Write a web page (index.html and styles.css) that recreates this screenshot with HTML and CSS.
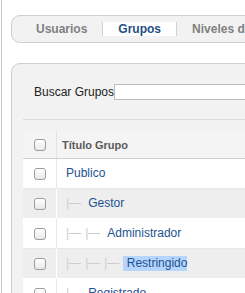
FILE: index.html
```html
<!DOCTYPE html>
<html lang="es">
<head>
  <meta charset="UTF-8">
  <link rel="stylesheet" href="styles.css">
</head>
<body>
  <div class="page">
    <ul class="tabs">
      <li>Usuarios</li>
      <li class="active">Grupos</li>
      <li>Niveles de acceso</li>
    </ul>

    <div class="panel">
      <div class="filter">
        <label for="search">Buscar Grupos</label>
        <input type="text" id="search">
      </div>
      <div class="rule"></div>

      <table class="groups">
        <thead>
          <tr>
            <th class="check"><span class="box"></span></th>
            <th>Título Grupo</th>
          </tr>
        </thead>
        <tbody>
          <tr>
            <td class="check"><span class="box"></span></td>
            <td><a href="#">Publico</a></td>
          </tr>
          <tr class="alt">
            <td class="check"><span class="box"></span></td>
            <td><span class="gi">|&mdash;</span><a href="#">Gestor</a></td>
          </tr>
          <tr>
            <td class="check"><span class="box"></span></td>
            <td><span class="gi">|&mdash;</span><span class="gi">|&mdash;</span><a href="#">Administrador</a></td>
          </tr>
          <tr class="alt">
            <td class="check"><span class="box"></span></td>
            <td><span class="gi">|&mdash;</span><span class="gi">|&mdash;</span><span class="gi">|&mdash;</span><a href="#" class="selected">&nbsp;Restringido</a></td>
          </tr>
          <tr>
            <td class="check"><span class="box"></span></td>
            <td><span class="gi">|&mdash;</span><a href="#">Registrado</a></td>
          </tr>
        </tbody>
      </table>
    </div>
  </div>
</body>
</html>
```

FILE: styles.css
```css
html, body {
  margin: 0;
  padding: 0;
  overflow: hidden;
  background-color: #fff;
}

body {
  font-family: "Liberation Sans", Arial, sans-serif;
  font-size: 12px;
  color: #222;
}

.page {
  margin-left: 1px;
  border-left: 1px solid #cacaca;
  padding: 15px 0 0 9px;
  height: 300px;
  width: 400px;
}

.tabs {
  display: flex;
  list-style: none;
  margin: 0;
  padding: 6px 0 6px 9px;
  width: 360px;
  border: 1px solid #cfcfcf;
  border-radius: 9px;
  background-color: #f2f2f2;
}

.tabs li {
  padding: 0 15px;
  line-height: 14px;
  height: 14px;
  font-weight: bold;
  color: #808080;
  white-space: nowrap;
  border-left: 1px solid #d2d2d2;
}

.tabs li:first-child {
  border-left: none;
}

.tabs li.active {
  background-color: #fff;
  color: #1f4f82;
}

.panel {
  margin-top: 20px;
  width: 360px;
  height: 260px;
  padding: 0 0 0 11px;
  border: 1px solid #cfcfcf;
  border-radius: 9px;
  background-color: #f2f2f2;
}

.filter {
  display: flex;
  align-items: center;
  padding: 20px 0 0 11px;
}

.filter label {
  line-height: 14px;
}

.filter input {
  width: 200px;
  height: 16px;
  margin: 0;
  padding: 0;
  border: 1px solid #bdbdbd;
  background-color: #fff;
  box-sizing: border-box;
  font-size: 12px;
}

.rule {
  margin-top: 19px;
  height: 1px;
  background-color: #dcdcdc;
}

.groups {
  margin-top: 11px;
  width: 340px;
  border-collapse: collapse;
}

.groups th,
.groups td {
  padding: 0;
  text-align: left;
  border-bottom: 1px solid #e8e8e8;
}

.groups th {
  height: 27px;
  background-color: #f4f4f4;
  border-bottom-color: #d0d0d0;
  font-size: 11px;
  font-weight: bold;
  color: #5a5a5a;
  padding-left: 5px;
}

.groups td {
  height: 29px;
  background-color: #fff;
  padding-left: 9px;
}

.groups .check {
  width: 33px;
  padding: 0;
  text-align: center;
  border-right: 1px solid #e6e6e6;
}

.groups th.check {
  border-right-color: #e4e4e4;
}

.groups tr.alt td {
  background-color: #eeeeee;
  border-bottom-color: #fff;
}

.groups tr.alt .check {
  border-right-color: #fff;
}

.box {
  display: inline-block;
  width: 10px;
  height: 10px;
  border: 1px solid #9c9c9c;
  border-radius: 3px;
  background: linear-gradient(#fff, #e9e9e9);
  vertical-align: middle;
  box-shadow: inset 0 1px 0 #fff;
}

.groups a {
  color: #1d5290;
  text-decoration: none;
  line-height: 15px;
}

.gi {
  color: #cdcdcd;
  margin-right: 4px;
}

.gi + a {
  margin-left: 3px;
}

.groups a.selected {
  margin-left: 0;
  background-color: #b5d5fd;
  display: inline-block;
}
```
